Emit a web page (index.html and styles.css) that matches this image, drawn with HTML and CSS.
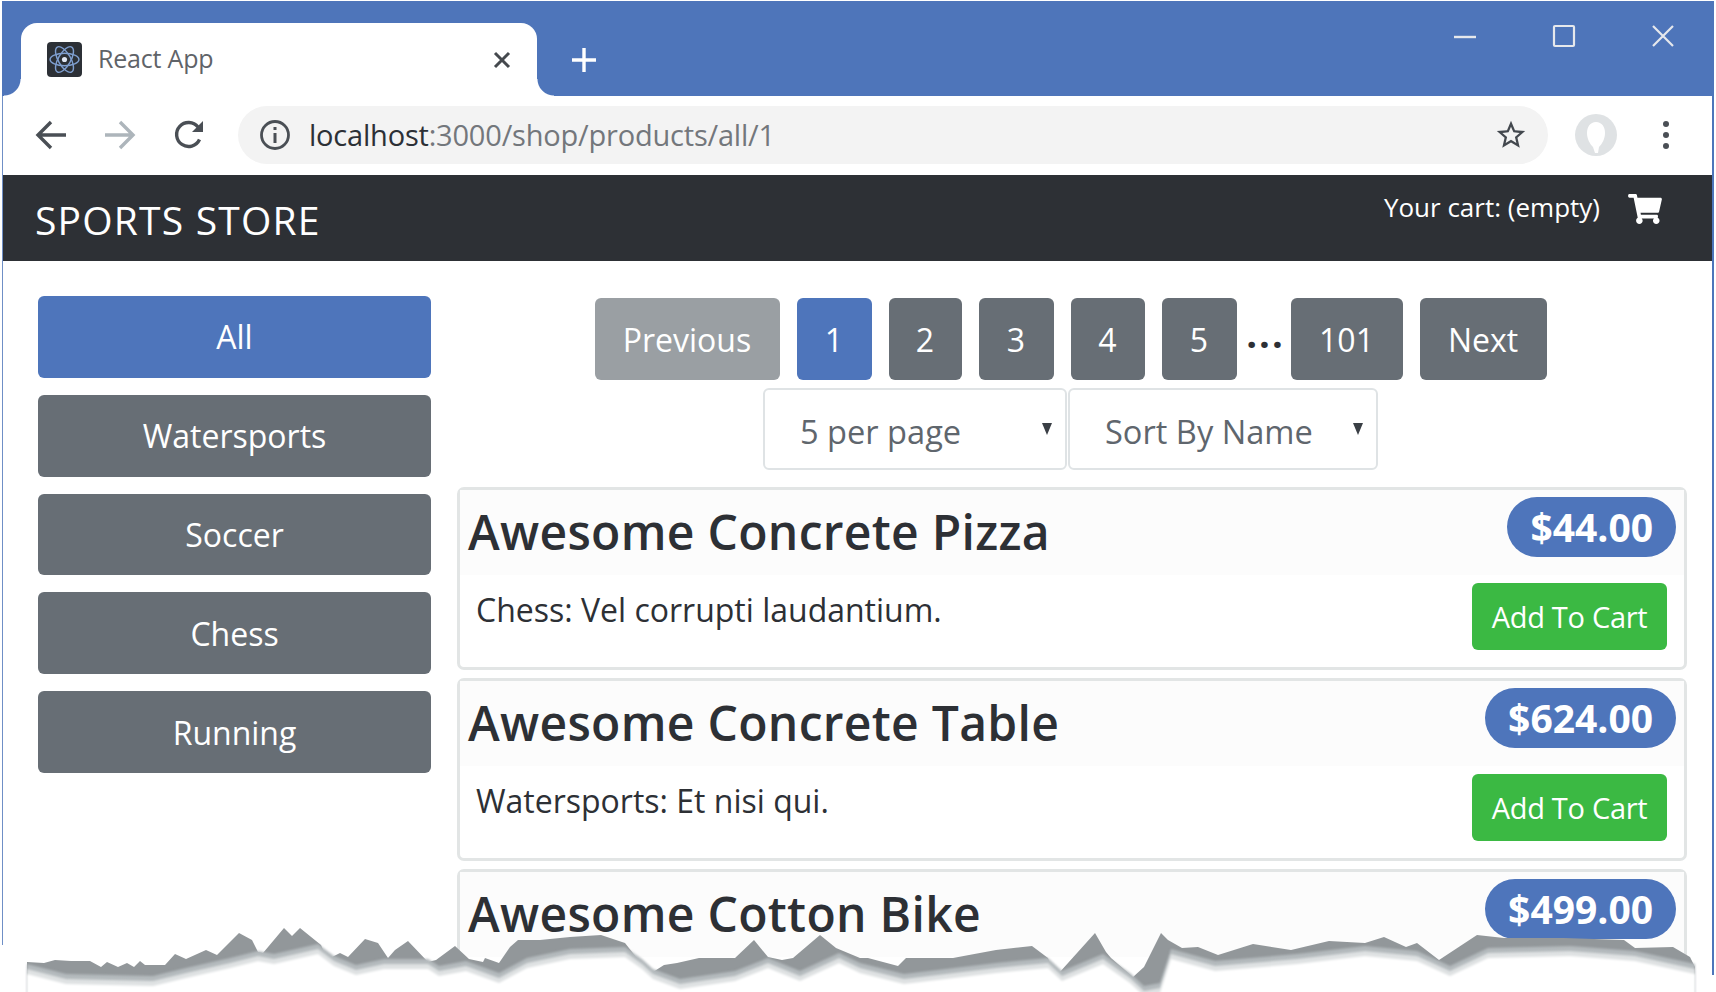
FILE: index.html
```html
<!DOCTYPE html>
<html lang="en">

<head>
    <meta charset="UTF-8">
    <title>React App</title>
    <link rel="stylesheet" href="styles.css">
</head>

<body>
    <div class="window">
        <div class="titlebar">
            <div class="tab">
                <svg class="favicon" viewBox="0 0 34 34">
                    <rect width="34" height="34" rx="4" fill="#2c3036" />
                    <g fill="none" stroke="#7f9fd0" stroke-width="1.4">
                        <ellipse cx="17" cy="17" rx="14" ry="6" />
                        <ellipse cx="17" cy="17" rx="14" ry="6" transform="rotate(60 17 17)" />
                        <ellipse cx="17" cy="17" rx="14" ry="6" transform="rotate(120 17 17)" />
                    </g>
                    <circle cx="17" cy="17" r="2.5" fill="#dfe6f2" />
                </svg>
                <span class="tab-title">React App</span>
                <svg class="tab-close" viewBox="0 0 18 18">
                    <path d="M2 2L16 16M16 2L2 16" stroke="#45494e" stroke-width="3" />
                </svg>
            </div>
            <svg class="new-tab" viewBox="0 0 26 26">
                <path d="M13 1V25M1 13H25" stroke="#fff" stroke-width="3.4" />
            </svg>
            <div class="win-controls">
                <svg viewBox="0 0 24 24"><path d="M1 13H23" stroke="#e6e8ec" stroke-width="2.4" /></svg>
                <svg viewBox="0 0 24 24"><rect x="2" y="2" width="20" height="20" rx="1" fill="none" stroke="#e6e8ec" stroke-width="2.2" /></svg>
                <svg viewBox="0 0 24 24"><path d="M2 2L22 22M22 2L2 22" stroke="#e6e8ec" stroke-width="2.2" /></svg>
            </div>
        </div>

        <div class="viewport">
            <div class="toolbar">
                <svg class="nav-icon" viewBox="0 0 32 32">
                    <path d="M31 16H3M16 3L3 16L16 29" fill="none" stroke="#4a4f55" stroke-width="3.4" />
                </svg>
                <svg class="nav-icon" viewBox="0 0 32 32">
                    <path d="M1 16H29M16 3L29 16L16 29" fill="none" stroke="#adb5bb" stroke-width="3.4" />
                </svg>
                <svg class="nav-icon" viewBox="0 0 32 32">
                    <path d="M26.5 20.5A12 12 0 1 1 25 8" fill="none" stroke="#4a4f55" stroke-width="3.4" />
                    <path d="M30 2V13H19Z" fill="#4a4f55" />
                </svg>
                <div class="omnibox">
                    <svg class="info-icon" viewBox="0 0 32 32">
                        <circle cx="16" cy="16" r="13.5" fill="none" stroke="#4a4f55" stroke-width="2.8" />
                        <path d="M16 14V24M16 8V11" stroke="#4a4f55" stroke-width="3" />
                    </svg>
                    <span class="url"><span class="url-host">localhost</span>:3000/shop/products/all/1</span>
                    <svg class="star" viewBox="0 0 24 24">
                        <path d="M22 9.24l-7.19-.62L12 2 9.19 8.63 2 9.24l5.46 4.73L5.82 21 12 17.27 18.18 21l-1.63-7.03L22 9.24zM12 15.4l-3.76 2.27 1-4.28-3.32-2.88 4.38-.38L12 6.1l1.71 4.04 4.38.38-3.32 2.88 1 4.28L12 15.4z" fill="#43484e" />
                    </svg>
                </div>
                <svg class="avatar" viewBox="0 0 42 42">
                    <circle cx="21" cy="21" r="21" fill="#dfe2e4" />
                    <path d="M21 8c-6 0-9 5-9 11 0 6 3 11 6 14l2 6h3l1-6c3-3 6-8 6-14 0-6-3-11-9-11z" fill="#fff" />
                </svg>
                <svg class="menu-dots" viewBox="0 0 8 30">
                    <circle cx="4" cy="4" r="3" fill="#4a4f55" />
                    <circle cx="4" cy="15" r="3" fill="#4a4f55" />
                    <circle cx="4" cy="26" r="3" fill="#4a4f55" />
                </svg>
            </div>

            <div class="store-nav">
                <span class="brand">SPORTS STORE</span>
                <div class="cart-summary">
                    <span>Your cart: (empty)</span>
                    <svg class="cart-icon" viewBox="0 0 576 512">
                        <path d="M528.12 301.319l47.273-208C578.806 78.301 567.391 64 551.99 64H159.208l-9.166-44.81C147.758 8.021 137.93 0 126.529 0H24C10.745 0 0 10.745 0 24v16c0 13.255 10.745 24 24 24h69.883l70.248 343.435C147.325 417.1 136 435.222 136 456c0 30.928 25.072 56 56 56s56-25.072 56-56c0-15.674-6.447-29.835-16.824-40h209.647C430.447 426.165 424 440.326 424 456c0 30.928 25.072 56 56 56s56-25.072 56-56c0-22.172-12.888-41.332-31.579-50.405l5.517-24.276c3.413-15.018-8.002-29.319-23.403-29.319H218.117l-6.545-32h293.145c11.206 0 20.92-7.754 23.403-18.681z" fill="#fff" />
                    </svg>
                </div>
            </div>

            <div class="content">
                <div class="sidebar">
                    <button class="btn btn-primary">All</button>
                    <button class="btn btn-secondary">Watersports</button>
                    <button class="btn btn-secondary">Soccer</button>
                    <button class="btn btn-secondary">Chess</button>
                    <button class="btn btn-secondary">Running</button>
                </div>

                <div class="main">
                    <div class="pagination">
                        <button class="btn btn-disabled">Previous</button>
                        <button class="btn btn-primary">1</button>
                        <button class="btn btn-secondary">2</button>
                        <button class="btn btn-secondary">3</button>
                        <button class="btn btn-secondary">4</button>
                        <button class="btn btn-secondary">5</button>
                        <span class="dots">...</span>
                        <button class="btn btn-secondary">101</button>
                        <button class="btn btn-secondary">Next</button>
                    </div>

                    <div class="selects">
                        <div class="select select-pages">5 per page</div>
                        <div class="select select-sort">Sort By Name</div>
                    </div>

                    <div class="card">
                        <div class="card-head">
                            <h4>Awesome Concrete Pizza</h4>
                            <span class="price">$44.00</span>
                        </div>
                        <div class="card-body">
                            <span class="desc">Chess: Vel corrupti laudantium.</span>
                            <button class="btn btn-success">Add To Cart</button>
                        </div>
                    </div>

                    <div class="card">
                        <div class="card-head">
                            <h4>Awesome Concrete Table</h4>
                            <span class="price">$624.00</span>
                        </div>
                        <div class="card-body">
                            <span class="desc">Watersports: Et nisi qui.</span>
                            <button class="btn btn-success">Add To Cart</button>
                        </div>
                    </div>

                    <div class="card">
                        <div class="card-head">
                            <h4>Awesome Cotton Bike</h4>
                            <span class="price">$499.00</span>
                        </div>
                    </div>
                </div>
            </div>
        </div>

        <!-- torn paper edge over the bottom of the shot -->
        <svg class="tear" viewBox="0 0 1716 992">
            <defs>
                <polygon id="tear-low" points="27,1020 27,974 66,984 153,986 186,978 230,968 258,961 274,964 318,954 334,966 356,975 384,969 428,969 439,976 466,971 499,983 527,968 570,959 625,957 642,969 653,979 680,989 735,981 768,968 800,981 839,963 860,973 904,984 996,973 1048,968 1062,981 1103,964 1130,983 1144,996 1160,993 1171,959 1215,971 1297,964 1365,956 1417,961 1450,976 1488,958 1570,956 1635,961 1695,974 1695,1020" />
            </defs>
            <rect x="0" y="945" width="30" height="60" fill="#fff" />
            <rect x="1695" y="975" width="21" height="30" fill="#fff" />
            <polygon class="tear-dark" points="27,962 44,963 55,960 71,961 90,961 101,967 107,962 118,967 127,963 134,967 140,961 145,965 165,965 175,954 186,959 206,950 217,955 239,933 252,940 258,952 263,953 284,928 292,936 300,928 321,945 324,952 332,957 340,953 348,957 365,939 378,943 388,958 395,950 408,941 428,962 436,960 455,946 469,959 483,962 485,958 499,963 510,947 518,940 540,940 570,937 601,935 625,943 636,957 642,963 653,972 664,965 677,963 699,958 735,958 754,940 768,957 782,960 793,958 820,935 836,948 860,958 868,958 898,966 906,958 953,958 969,955 996,950 1032,946 1048,958 1051,967 1059,973 1095,933 1106,952 1111,958 1133,977 1144,967 1161,933 1168,940 1182,948 1198,947 1218,955 1253,944 1291,950 1329,941 1365,943 1384,937 1406,947 1417,943 1439,960 1477,935 1504,938 1564,938 1624,940 1635,948 1673,947 1690,957 1695,967 1695,1020 27,1020" />
            <use href="#tear-low" class="tear-mid" y="-10" />
            <use href="#tear-low" class="tear-light" y="-5" />
            <use href="#tear-low" class="tear-white" />
        </svg>
    </div>
</body>

</html>
```

FILE: styles.css
```css
body {
    margin: 0;
    background-color: #fff;
    font-family: "Open Sans", "Noto Sans", sans-serif;
}

.window {
    position: relative;
    width: 1716px;
    height: 992px;
    overflow: hidden;
    box-sizing: border-box;
    padding: 1px 2px 0;
}

/* browser chrome */
.titlebar {
    display: flex;
    align-items: flex-start;
    height: 95px;
    padding: 22px 0 0 19px;
    box-sizing: border-box;
    background-color: #4e75ba;
}

.tab {
    position: relative;
    display: flex;
    align-items: center;
    width: 516px;
    height: 73px;
    padding: 0 26px 0 26px;
    box-sizing: border-box;
    background-color: #fff;
    border-radius: 16px 16px 0 0;
}

.tab::before,
.tab::after {
    content: "";
    position: absolute;
    bottom: 0;
    width: 17px;
    height: 17px;
}

.tab::before {
    left: -17px;
    background: radial-gradient(circle at 0 0, #4e75ba 16px, #fff 17px);
}

.tab::after {
    right: -17px;
    background: radial-gradient(circle at 100% 0, #4e75ba 16px, #fff 17px);
}

.favicon {
    width: 35px;
    height: 35px;
}

.tab-title {
    flex: 1;
    margin: 0 0 3px 16px;
    font-size: 25px;
    letter-spacing: -0.2px;
    color: #5f6368;
}

.tab-close {
    width: 18px;
    height: 18px;
}

.new-tab {
    width: 26px;
    height: 26px;
    margin: 24px 0 0 34px;
}

.win-controls {
    display: flex;
    gap: 75px;
    margin: 1px 0 0 auto;
    padding-right: 39px;
}

.win-controls svg {
    width: 24px;
    height: 24px;
}

/* everything under the title bar, inside the thin window border */
.viewport {
    height: 896px;
    border-left: 1px solid #6f8fc6;
    border-right: 2px solid #4e75ba;
}

.toolbar {
    display: flex;
    align-items: center;
    height: 79px;
    padding: 0 0 2px 32px;
    box-sizing: border-box;
    background-color: #fff;
}

.nav-icon {
    width: 32px;
    height: 32px;
    margin-right: 37px;
}

.omnibox {
    display: flex;
    align-items: center;
    width: 1310px;
    height: 58px;
    margin-left: -4px;
    padding: 0 20px 0 21px;
    box-sizing: border-box;
    background-color: #f3f3f3;
    border-radius: 29px;
}

.info-icon {
    width: 32px;
    height: 32px;
}

.url {
    flex: 1;
    margin-left: 18px;
    font-size: 29px;
    letter-spacing: -0.2px;
    color: #73777c;
}

.url-host {
    color: #2c3036;
}

.star {
    width: 34px;
    height: 34px;
}

.avatar {
    width: 42px;
    height: 42px;
    margin-left: 27px;
}

.menu-dots {
    width: 8px;
    height: 30px;
    margin-left: 45px;
}

/* store page */
.store-nav {
    display: flex;
    justify-content: space-between;
    height: 86px;
    padding: 0 50px 0 32px;
    box-sizing: border-box;
    background-color: #2d3035;
    color: #fff;
}

.brand {
    margin-top: 19px;
    font-size: 39px;
    line-height: 52px;
    letter-spacing: 1.2px;
}

.cart-summary {
    display: flex;
    align-items: center;
    gap: 28px;
    height: 64px;
    font-size: 26px;
    letter-spacing: 0;
}

.cart-icon {
    width: 34px;
    height: 30px;
    margin-top: 4px;
}

.content {
    display: flex;
    gap: 26px;
    padding: 35px 25px 0 35px;
}

.sidebar {
    display: flex;
    flex-direction: column;
    gap: 17px;
    flex: none;
    width: 393px;
}

.btn {
    border: 0;
    border-radius: 6px;
    font-family: inherit;
    font-size: 32px;
    color: #fff;
    padding: 0;
}

.sidebar .btn {
    height: 81.8px;
}

.btn-primary {
    background-color: #4e75bb;
}

.btn-secondary {
    background-color: #676e75;
}

.btn-disabled {
    background-color: #9a9fa3;
}

.btn-success {
    width: 195px;
    height: 67px;
    background-color: #3bb943;
    font-size: 29px;
    letter-spacing: -0.3px;
}

.main {
    flex: 1;
    min-width: 0;
}

.pagination {
    display: grid;
    grid-template-columns: 185px 75px 73px 75px 74px 75px 20px 112px 127px;
    grid-template-rows: 82px;
    justify-content: center;
    column-gap: 17px;
    margin-top: 2px;
    padding-right: 3px;
}

.dots {
    display: flex;
    justify-content: center;
    padding-left: 4px;
    font-size: 38px;
    font-weight: 700;
    color: #2d3035;
    letter-spacing: 2px;
    line-height: 70px;
}

.selects {
    display: flex;
    justify-content: center;
    gap: 1px;
    margin-top: 8px;
    padding-right: 3px;
}

.select {
    position: relative;
    height: 82px;
    padding-left: 35px;
    box-sizing: border-box;
    border: 2px solid #dfe3e5;
    border-radius: 6px;
    font-size: 32.6px;
    line-height: 84px;
    color: #5f666d;
}

.select::after {
    content: "";
    position: absolute;
    top: 33px;
    right: 13px;
    border-top: 12px solid #3a3f45;
    border-left: 5px solid transparent;
    border-right: 5px solid transparent;
}

.select-pages {
    width: 304px;
}

.select-sort {
    width: 310px;
}

.card {
    box-sizing: border-box;
    height: 183px;
    margin-top: 17px;
    border: 3px solid #e2e5e5;
    border-radius: 7px;
}

.card + .card {
    margin-top: 8px;
}

.card-head {
    display: flex;
    justify-content: space-between;
    height: 85px;
    padding: 7px 8px 0;
    box-sizing: border-box;
    background-color: #fcfcfc;
}

.card-head h4 {
    margin: 0;
    font-size: 48px;
    font-weight: 600;
    line-height: 70px;
    color: #2d3035;
    letter-spacing: 0.3px;
}

.price {
    padding: 0 23px;
    height: 60px;
    background-color: #4e75bb;
    border-radius: 30px;
    font-size: 39px;
    font-weight: 700;
    line-height: 60px;
    color: #fff;
}

.card-body {
    display: flex;
    justify-content: space-between;
    align-items: flex-start;
    padding: 8px 17px 0 16px;
}

.desc {
    font-size: 32px;
    line-height: 44px;
    margin-top: 5px;
    color: #2d3035;
}

/* torn edge */
.tear {
    position: absolute;
    top: 0;
    left: 0;
    width: 1716px;
    height: 992px;
}

.tear-dark {
    fill: #92979a;
}

.tear-mid {
    fill: #b4babd;
    filter: blur(1px);
}

.tear-light {
    fill: #dfe2e3;
    filter: blur(1px);
}

.tear-white {
    fill: #fff;
    filter: blur(1px);
}
```
